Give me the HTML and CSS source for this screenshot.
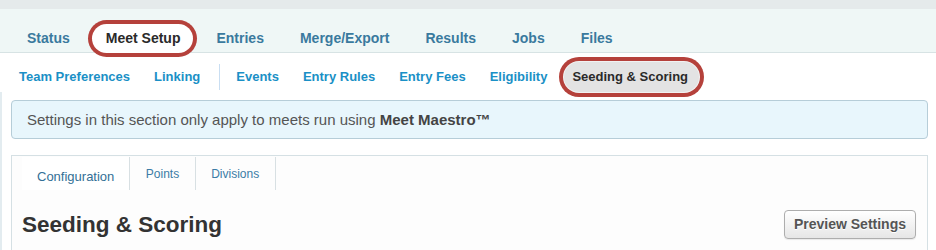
FILE: index.html
```html
<!DOCTYPE html>
<html lang="en">
<head>
<meta charset="utf-8">
<title>Seeding &amp; Scoring</title>
<link rel="stylesheet" href="styles.css">
</head>
<body>
<div class="topstrip"></div>
<header class="mainnav">
  <a class="tab">Status</a>
  <a class="tab active">Meet Setup</a>
  <a class="tab">Entries</a>
  <a class="tab">Merge/Export</a>
  <a class="tab">Results</a>
  <a class="tab">Jobs</a>
  <a class="tab">Files</a>
</header>
<nav class="subnav">
  <a class="sub">Team Preferences</a>
  <a class="sub">Linking</a>
  <span class="sep"></span>
  <a class="sub">Events</a>
  <a class="sub">Entry Rules</a>
  <a class="sub">Entry Fees</a>
  <a class="sub">Eligibility</a>
  <a class="sub active">Seeding &amp; Scoring</a>
</nav>
<main class="content">
  <div class="alert">Settings in this section only apply to meets run using <strong>Meet Maestro™</strong></div>
  <section class="panel">
    <div class="ptabs">
      <a class="ptab active">Configuration</a>
      <a class="ptab">Points</a>
      <a class="ptab">Divisions</a>
    </div>
    <div class="phead">
      <h1>Seeding &amp; Scoring</h1>
      <button class="btn">Preview Settings</button>
    </div>
  </section>
</main>
</body>
</html>
```
FILE: styles.css
```css
html, body {
  margin: 0;
  padding: 0;
  background: #fff;
  overflow: hidden;
}
body {
  font-family: "Liberation Sans", Arial, sans-serif;
}
.topstrip {
  height: 9px;
  background: #e5eaeb;
}
.mainnav {
  display: flex;
  padding: 15px 0 0 9px;
  background: #eff7f6;
  border-bottom: 1px solid #d7e3e4;
}
.tab {
  padding: 6px 18px 7px;
  margin-bottom: -1px;
  font-size: 14px;
  line-height: 16px;
  font-weight: bold;
  color: #3a7a9e;
}
.tab.active {
  position: relative;
  z-index: 0;
  color: #2a2a2a;
}
.tab.active::before {
  content: "";
  position: absolute;
  top: 0;
  bottom: 0;
  left: 4px;
  right: 5px;
  background: #fff;
  border-radius: 16px;
  box-shadow: 0 0 0 4px #b5413b;
  z-index: -1;
}
.subnav {
  display: flex;
  align-items: center;
  padding: 9px 0 0 7px;
}
.sub {
  padding: 7px 12px;
  font-size: 13px;
  line-height: 16px;
  font-weight: bold;
  color: #1a90c6;
}
.sub.active {
  position: relative;
  z-index: 0;
  padding-left: 13px;
  padding-right: 15px;
  color: #2a2a2a;
}
.sub.active::before {
  content: "";
  position: absolute;
  top: 0;
  bottom: 0;
  left: 5px;
  right: 4px;
  background: #e3e3e3;
  border-radius: 16px;
  box-shadow: 0 0 0 1px #f2f2f2, 0 0 0 5px #b5413b;
  z-index: -1;
}
.sep {
  width: 1px;
  height: 26px;
  background: #c9def2;
  margin: 0 4px 0 7px;
}
.content {
  border-left: 2px solid #e3ecf0;
  padding: 8px 8px 0 9px;
}
.alert {
  padding: 10px 15px;
  border: 1px solid #b6cdd8;
  border-radius: 4px;
  background: #e8f6fc;
  font-size: 15px;
  line-height: 17px;
  color: #555;
}
.alert strong {
  color: #444;
}
.panel {
  margin-top: 16px;
  border: 1px solid #d5e0e4;
  background: #fdfdfd;
  padding: 1px 11px 20px 10px;
}
.ptabs {
  display: flex;
}
.ptab {
  box-sizing: border-box;
  height: 33px;
  padding: 10px 15.5px 0;
  font-size: 12px;
  line-height: 15px;
  color: #3b7ca6;
  border-right: 1px solid #d8e0e3;
}
.ptab.active {
  padding: 12px 15px 0;
  font-size: 13px;
  background: #fff;
  color: #336f96;
}
.phead {
  display: flex;
  justify-content: space-between;
  align-items: center;
  margin-top: 20px;
}
.phead h1 {
  margin: 0;
  font-size: 22.5px;
  line-height: 24px;
  font-weight: bold;
  color: #333;
}
.btn {
  font-family: "Liberation Sans", Arial, sans-serif;
  font-size: 14px;
  line-height: 15px;
  font-weight: bold;
  color: #555;
  padding: 6px 9px;
  border: 1px solid #adadad;
  border-radius: 4px;
  background: linear-gradient(#ffffff, #e6e6e6);
  box-shadow: 0 1px 1px rgba(0, 0, 0, 0.08);
  text-shadow: 0 1px 0 #fff;
}
```
